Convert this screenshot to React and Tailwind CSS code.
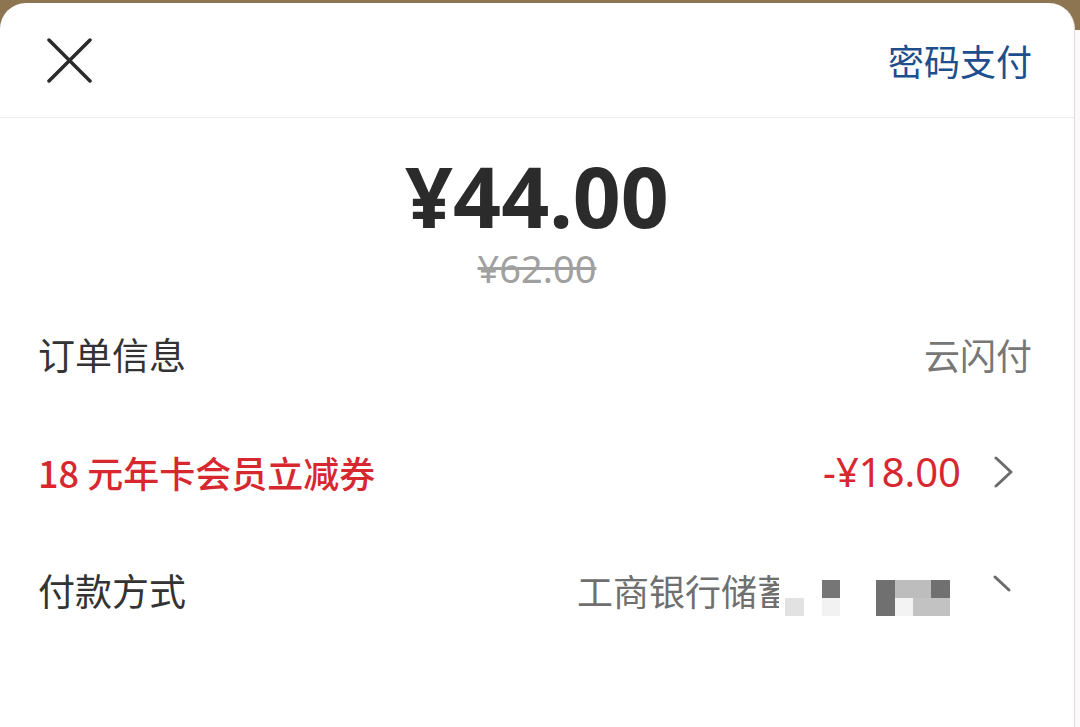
import React from "react";

const cjk = { fontFamily: '"Noto Sans CJK SC", "Noto Sans", sans-serif' };
const num = { fontFamily: '"Noto Sans", "Noto Sans CJK SC", sans-serif' };

// 右侧箭头
function Chevron({ half = false }) {
  return (
    <svg width="22" height="32" viewBox="0 0 22 32" className="mr-[18px] shrink-0">
      <path
        d={half ? "M3 3 L17 16" : "M4 2 L19 16 L4 30"}
        fill="none"
        stroke="#6b6b6b"
        strokeWidth="3"
        strokeLinecap="round"
        strokeLinejoin="round"
      />
    </svg>
  );
}

// 打码的卡号
function Mosaic() {
  return (
    <svg width="165" height="52" viewBox="0 0 165 52" className="shrink-0">
      <rect x="0" y="34" width="19" height="18" fill="#e2e2e2" />
      <rect x="37" y="16" width="18" height="18" fill="#767676" />
      <rect x="37" y="34" width="18" height="18" fill="#f2f2f2" />
      <rect x="91" y="16" width="19" height="36" fill="#707070" />
      <rect x="110" y="16" width="36" height="18" fill="#bdbdbd" />
      <rect x="146" y="16" width="19" height="18" fill="#707070" />
      <rect x="110" y="34" width="18" height="18" fill="#f3f3f3" />
      <rect x="128" y="34" width="37" height="18" fill="#c2c2c2" />
    </svg>
  );
}

export default function App() {
  return (
    <div className="min-h-screen bg-[linear-gradient(to_bottom,#8c7550_0px,#8c7550_30px,#fbf9fa_30px)] pt-[3px]">
      <div className="w-[1075px] h-[724px] bg-white rounded-t-[26px] border-r border-[#e2dde0]">
        {/* 顶部栏 */}
        <div className="h-[115px] flex items-center justify-between pl-[47px] pr-[42px] border-b border-[#eeeeee]">
          <svg width="45" height="45" viewBox="0 0 45 45">
            <path d="M2 2 L43 43 M43 2 L2 43" stroke="#2a2a2a" strokeWidth="3.5" strokeLinecap="round" />
          </svg>
          <span className="text-[36px] leading-none text-[#1d4e8d]" style={cjk}>
            密码支付
          </span>
        </div>

        {/* 金额 */}
        <div className="flex flex-col items-center pt-[36px]">
          <div className="text-[84px] leading-none font-bold text-[#2b2b2b]" style={num}>
            ¥44.00
          </div>
          <div className="mt-[11px] text-[38px] leading-none text-[#a0a0a0] line-through" style={num}>
            ¥62.00
          </div>
        </div>

        {/* 订单行 */}
        <div className="mt-[8px]">
          <div className="h-[118px] flex items-center justify-between pl-[38px] pr-[42px]">
            <span className="text-[37px] leading-none text-[#333333]" style={cjk}>订单信息</span>
            <span className="text-[36px] leading-none text-[#777777]" style={cjk}>云闪付</span>
          </div>

          <div className="h-[118px] flex items-center justify-between pl-[38px] pr-[42px]">
            <span className="text-[36px] leading-none font-medium text-[#d8282f]" style={cjk}>18 元年卡会员立减券</span>
            <div className="flex items-center">
              <span className="text-[40px] leading-none text-[#d8282f]" style={num}>-¥18.00</span>
              <div className="ml-[31px]">
                <Chevron />
              </div>
            </div>
          </div>

          <div className="h-[118px] flex items-center justify-between pl-[38px] pr-[42px]">
            <span className="text-[37px] leading-none text-[#333333]" style={cjk}>付款方式</span>
            <div className="flex items-center">
              <span className="text-[36px] leading-none text-[#6f6f6f]" style={cjk}>工商银行储</span>
              <span className="inline-block w-[22px] overflow-hidden whitespace-nowrap text-[36px] leading-none text-[#6f6f6f]" style={cjk}>蓄</span>
              <div className="ml-[6px]">
                <Mosaic />
              </div>
              <div className="ml-[42px]">
                <Chevron half />
              </div>
            </div>
          </div>
        </div>
      </div>
    </div>
  );
}
